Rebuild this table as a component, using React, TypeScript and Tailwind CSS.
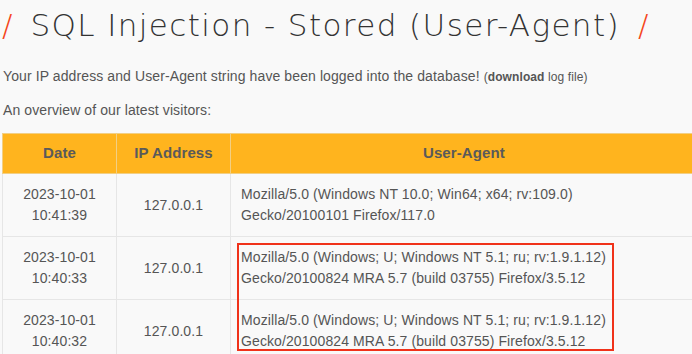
import React from "react";

const rows = [
  { d: "2023-10-01", t: "10:41:39", ip: "127.0.0.1", ua1: "Mozilla/5.0 (Windows NT 10.0; Win64; x64; rv:109.0)", ua2: "Gecko/20100101 Firefox/117.0" },
  { d: "2023-10-01", t: "10:40:33", ip: "127.0.0.1", ua1: "Mozilla/5.0 (Windows; U; Windows NT 5.1; ru; rv:1.9.1.12)", ua2: "Gecko/20100824 MRA 5.7 (build 03755) Firefox/3.5.12" },
  { d: "2023-10-01", t: "10:40:32", ip: "127.0.0.1", ua1: "Mozilla/5.0 (Windows; U; Windows NT 5.1; ru; rv:1.9.1.12)", ua2: "Gecko/20100824 MRA 5.7 (build 03755) Firefox/3.5.12" },
];

export default function App() {
  return (
    <div className="relative w-[692px] h-[354px] overflow-hidden bg-[#f9f9f9] text-[#555]" style={{ fontFamily: '"Liberation Sans", Arial, sans-serif' }}>
      <h1 className="flex items-center h-[50px] pl-[2px] text-[31px] leading-none text-[#333] whitespace-nowrap" style={{ fontFamily: '"DejaVu Sans", sans-serif' }}>
        <span className="text-[#f5461b] font-extralight mr-[18px]">/</span>
        <span className="font-extralight tracking-[1.4px]">SQL Injection - Stored (User-Agent)</span>
        <span className="text-[#f5461b] font-extralight ml-[18px]">/</span>
      </h1>
      <p className="mt-[17px] pl-[3px] text-[14px] leading-[18px] tracking-[0.1px] whitespace-nowrap">
        Your IP address and User-Agent string have been logged into the database!{" "}
        <span className="text-[12px]">(<b>download</b> log file)</span>
      </p>
      <p className="mt-[15px] pl-[3px] text-[14px] leading-[18px] tracking-[0.1px]">An overview of our latest visitors:</p>
      <table className="mt-[14px] ml-[2px] w-[760px] border-collapse text-[14px] tracking-[0.1px] table-fixed">
        <colgroup>
          <col className="w-[114px]" />
          <col className="w-[114px]" />
          <col />
        </colgroup>
        <thead>
          <tr className="h-[40px] bg-[#ffb41e]">
            <th className="border border-[#f2cf84] font-bold text-[15px] text-[#5a5a5a]">Date</th>
            <th className="border border-[#f2cf84] font-bold text-[15px] text-[#5a5a5a]">IP Address</th>
            <th className="border border-[#f2cf84] font-bold text-[15px] text-[#5a5a5a] text-left pl-[192px]">User-Agent</th>
          </tr>
        </thead>
        <tbody>
          {rows.map((r, i) => (
            <tr key={i} className="h-[63px]">
              <td className="border border-[#e6e6e6] text-center leading-[21px]">
                {r.d}
                <br />
                {r.t}
              </td>
              <td className="border border-[#e6e6e6] text-center">{r.ip}</td>
              <td className="border border-[#e6e6e6] pl-[10px] leading-[21px] whitespace-nowrap">
                {r.ua1}
                <br />
                {r.ua2}
              </td>
            </tr>
          ))}
        </tbody>
      </table>
      <div className="absolute left-[237px] top-[243px] w-[377px] h-[108px] border-2 border-[#f0321a]" />
    </div>
  );
}
